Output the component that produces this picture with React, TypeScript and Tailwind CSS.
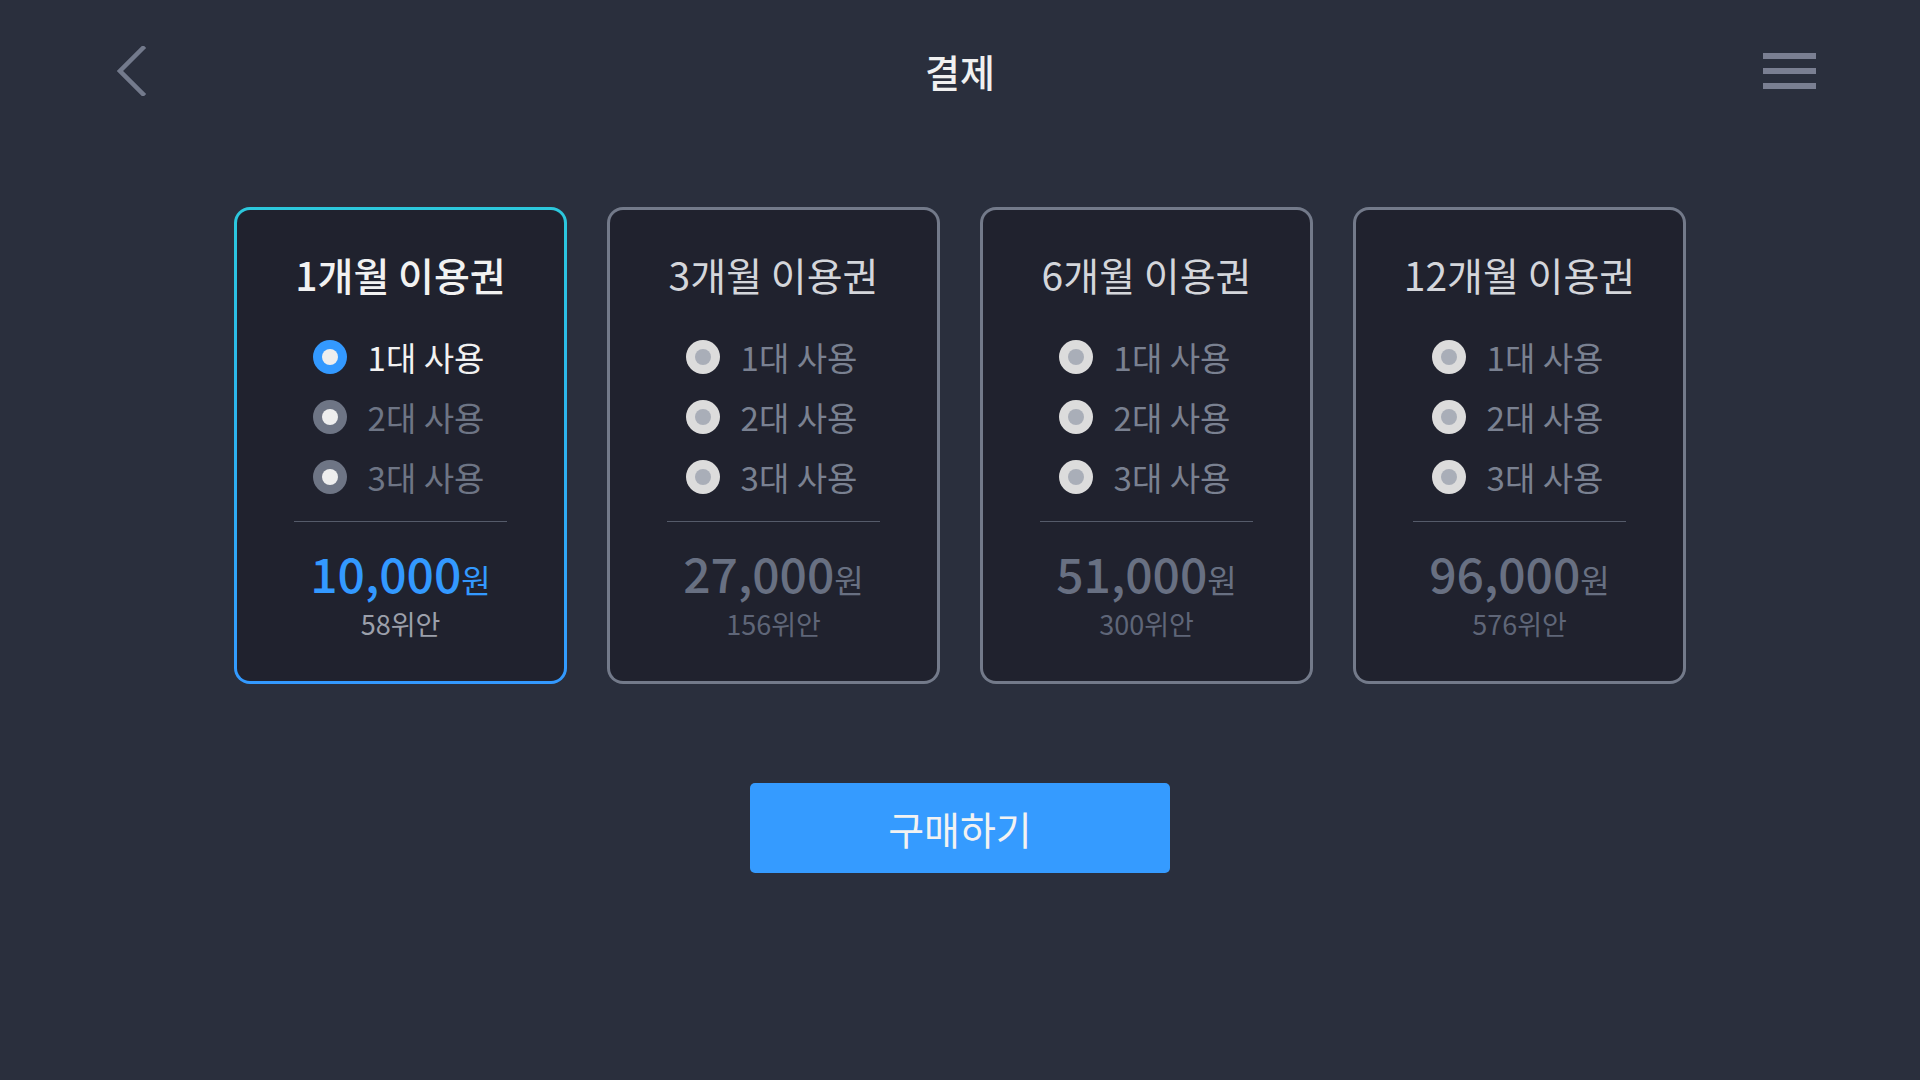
import React from "react";

type Plan = { title: string; price: string; sub: string };

const plans: Plan[] = [
  { title: "1개월 이용권", price: "10,000", sub: "58위안" },
  { title: "3개월 이용권", price: "27,000", sub: "156위안" },
  { title: "6개월 이용권", price: "51,000", sub: "300위안" },
  { title: "12개월 이용권", price: "96,000", sub: "576위안" },
];

const font = { fontFamily: '"Noto Sans CJK KR", "Noto Sans", sans-serif' };

function Radio({ variant }: { variant: "on" | "off" | "dim" }) {
  if (variant === "on")
    return (
      <span className="flex h-[34px] w-[34px] shrink-0 items-center justify-center rounded-full bg-[#3399ff]">
        <span className="h-[16px] w-[16px] rounded-full bg-[#eeeeee]" />
      </span>
    );
  if (variant === "off")
    return (
      <span className="flex h-[34px] w-[34px] shrink-0 items-center justify-center rounded-full bg-[#6e7585]">
        <span className="h-[16px] w-[16px] rounded-full bg-[#eeeeee]" />
      </span>
    );
  return (
    <span className="flex h-[34px] w-[34px] shrink-0 items-center justify-center rounded-full bg-[#dcdcdc]">
      <span className="h-[16px] w-[16px] rounded-full bg-[#a9aeb8]" />
    </span>
  );
}

function CardBody({ plan, active }: { plan: Plan; active: boolean }) {
  const rows = ["1대 사용", "2대 사용", "3대 사용"];
  return (
    <div className="flex h-full w-full flex-col items-center rounded-[13px] bg-[#20222e] pt-[40px]">
      <div
        className={
          active
            ? "whitespace-nowrap text-[39px] leading-[48px] font-medium text-[#f2f2f2]"
            : "whitespace-nowrap text-[39px] leading-[48px] font-normal text-[#d4d6db]"
        }
      >
        {plan.title}
      </div>
      <div className="mt-[29px] flex flex-col">
        {rows.map((r, i) => (
          <div key={r} className="flex h-[60px] items-center gap-[21px] pr-[4px]">
            <Radio variant={active ? (i === 0 ? "on" : "off") : "dim"} />
            <span
              className={
                active
                  ? i === 0
                    ? "whitespace-nowrap text-[33px] leading-[40px] text-[#f2f2f2]"
                    : "whitespace-nowrap text-[33px] leading-[40px] text-[#6e7585]"
                  : "whitespace-nowrap text-[33px] leading-[40px] text-[#7a8191]"
              }
            >
              {r}
            </span>
          </div>
        ))}
      </div>
      <div className="mt-[14px] h-px w-[213px] bg-[#555b6a]" />
      <div className="mt-[25px] flex items-baseline">
        <span
          className={
            active
              ? "text-[48px] leading-[50px] font-medium text-[#3399ff]"
              : "text-[48px] leading-[50px] font-medium text-[#687082]"
          }
        >
          {plan.price}
        </span>
        <span
          className={
            active
              ? "text-[32px] leading-[36px] text-[#3399ff]"
              : "text-[32px] leading-[36px] text-[#687082]"
          }
        >
          원
        </span>
      </div>
      <div
        className={
          active
            ? "mt-[13px] text-[27px] leading-[28px] text-[#9ca0ab]"
            : "mt-[13px] text-[27px] leading-[28px] text-[#5f6678]"
        }
      >
        {plan.sub}
      </div>
    </div>
  );
}

export default function App() {
  return (
    <div
      className="flex h-[1080px] w-[1920px] flex-col bg-[#2a2f3d]"
      style={font}
    >
      <header className="grid h-[142px] grid-cols-[1fr_auto_1fr] items-center px-[104px]">
        <div className="flex items-center pl-[13px]">
          <svg width="30" height="50" viewBox="0 0 30 50" fill="none">
            <path
              d="M26 2 L3 25 L26 48"
              stroke="#737a8c"
              strokeWidth="4.5"
              strokeLinecap="square"
              strokeLinejoin="miter"
            />
          </svg>
        </div>
        <div className="text-[38px] leading-[48px] font-medium text-[#f0f0f0]">결제</div>
        <div className="flex justify-end">
          <div className="flex flex-col gap-[9px]">
            <span className="block h-[6px] w-[53px] bg-[#7a7f92]" />
            <span className="block h-[6px] w-[53px] bg-[#7a7f92]" />
            <span className="block h-[6px] w-[53px] bg-[#7a7f92]" />
          </div>
        </div>
      </header>

      <div className="mt-[65px] flex justify-center gap-[40px]">
        {plans.map((p, i) =>
          i === 0 ? (
            <div
              key={p.title}
              className="h-[477px] w-[333px] rounded-[16px] bg-gradient-to-b from-[#2cc8dc] to-[#3399ff] p-[3px]"
            >
              <CardBody plan={p} active />
            </div>
          ) : (
            <div
              key={p.title}
              className="h-[477px] w-[333px] rounded-[16px] bg-[#737a8a] p-[3px]"
            >
              <CardBody plan={p} active={false} />
            </div>
          )
        )}
      </div>

      <div className="mt-[99px] flex justify-center">
        <button className="flex h-[90px] w-[420px] items-center justify-center rounded-[5px] bg-[#359bff] text-[39px] leading-[48px] text-[#f2f2f2]">
          구매하기
        </button>
      </div>
    </div>
  );
}
